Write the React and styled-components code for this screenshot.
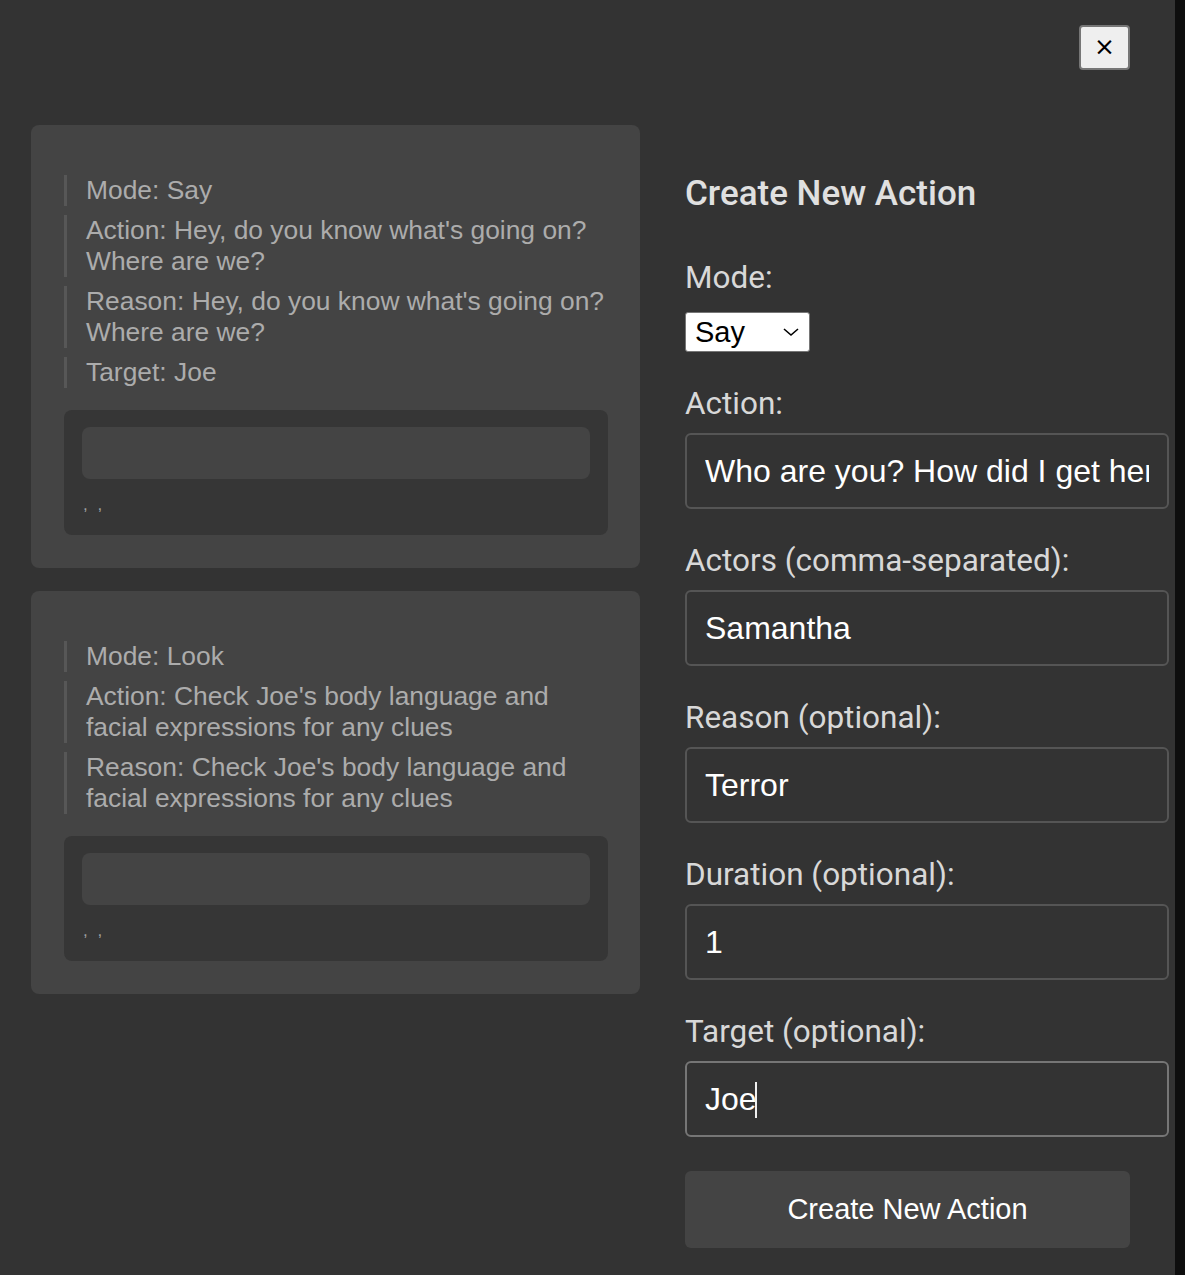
import React, { useState } from "react";
import styled, { createGlobalStyle } from "styled-components";

const GlobalStyle = createGlobalStyle`
  html, body {
    margin: 0;
    padding: 0;
    background: #0e0e0e;
  }
  * {
    box-sizing: border-box;
  }
`;

const Modal = styled.div`
  width: 1175px;
  min-height: 1275px;
  background: #333333;
  padding: 25px 45px 0 31px;
  overflow: hidden;
`;

const TopBar = styled.div`
  display: flex;
  justify-content: flex-end;
`;

const CloseButton = styled.button`
  width: 51px;
  height: 45px;
  background: #efefef;
  border: 2px solid #767676;
  border-radius: 4px;
  color: #000;
  font-family: "DejaVu Sans", sans-serif;
  font-size: 25px;
  line-height: 1;
  padding: 0 0 2px;
  cursor: pointer;
`;

const Columns = styled.div`
  display: flex;
  align-items: flex-start;
  gap: 45px;
  margin-top: 55px;
`;

const ActionList = styled.div`
  width: 609px;
  display: flex;
  flex-direction: column;
  gap: 23px;
`;

const Card = styled.div`
  background: #444444;
  border-radius: 8px;
  padding: 50px 32px 33px 33px;
`;

const Lines = styled.div`
  display: flex;
  flex-direction: column;
  gap: 9px;
  margin-bottom: 22px;
`;

const Line = styled.div`
  border-left: 3px solid #575757;
  padding-left: 19px;
  color: #acacac;
  font-family: "Liberation Sans", Arial, sans-serif;
  font-size: 26.4px;
  line-height: 31px;
`;

const Result = styled.div`
  background: #363636;
  border-radius: 8px;
  padding: 17px 18px 20px;
`;

const ResultBar = styled.div`
  height: 52px;
  background: #444444;
  border-radius: 8px;
`;

const ResultMeta = styled.div`
  margin-top: 16px;
  color: #a0a0a0;
  font-family: "Liberation Sans", Arial, sans-serif;
  font-size: 17px;
  line-height: 20px;
  word-spacing: 5px;
  padding-left: 1px;
`;

const Form = styled.form`
  width: 445px;
  padding-top: 48px;
  font-family: Roboto, "Liberation Sans", sans-serif;
`;

const Title = styled.h2`
  margin: 0 0 46px;
  color: #e0e0e0;
  font-family: Roboto, sans-serif;
  font-size: 35px;
  font-weight: 500;
  line-height: 41px;
`;

const Field = styled.div`
  margin-bottom: 34px;
`;

const Label = styled.label`
  display: block;
  color: #d8d8d8;
  font-family: Roboto, sans-serif;
  font-size: 31.5px;
  line-height: 36px;
  margin-bottom: 11px;
`;

const SelectWrap = styled.div`
  position: relative;
  width: 125px;
  margin-top: 16px;
`;

const Select = styled.select`
  display: block;
  appearance: none;
  width: 125px;
  height: 40px;
  background: #ffffff;
  color: #000;
  border: 1px solid #767676;
  border-radius: 3px;
  font-family: "Liberation Sans", Arial, sans-serif;
  font-size: 29px;
  padding: 0 0 0 9px;
`;

const Chevron = styled.svg`
  position: absolute;
  right: 10px;
  top: 15px;
  width: 18px;
  height: 10px;
  pointer-events: none;
`;

const InputWrap = styled.div`
  position: relative;
  width: 484px;
`;

const Input = styled.input`
  display: block;
  width: 484px;
  height: 76px;
  padding: 0 18px;
  background: #333333;
  color: #ffffff;
  border: 2px solid #555555;
  border-radius: 6px;
  font-family: "Liberation Sans", Arial, sans-serif;
  font-size: 32px;
  outline: none;
  caret-color: ${(p) => (p.$fakeCaret ? "transparent" : "#fff")};

  &:focus {
    border-color: #767676;
  }
`;

const Caret = styled.span`
  position: absolute;
  left: ${(p) => p.$left}px;
  top: 21px;
  width: 2px;
  height: 36px;
  background: #f0f0f0;
  pointer-events: none;
`;

const SubmitButton = styled.button`
  width: 445px;
  height: 77px;
  background: #444444;
  color: #ffffff;
  border: none;
  border-radius: 6px;
  font-family: "Liberation Sans", Arial, sans-serif;
  font-size: 29px;
  cursor: pointer;
`;

const actions = [
  {
    mode: "Say",
    action: "Hey, do you know what's going on? Where are we?",
    reason: "Hey, do you know what's going on? Where are we?",
    target: "Joe",
  },
  {
    mode: "Look",
    action: "Check Joe's body language and facial expressions for any clues",
    reason: "Check Joe's body language and facial expressions for any clues",
  },
];

const ActionCard = ({ item }) => (
  <Card>
    <Lines>
      <Line>Mode: {item.mode}</Line>
      <Line>Action: {item.action}</Line>
      {item.reason && <Line>Reason: {item.reason}</Line>}
      {item.target && <Line>Target: {item.target}</Line>}
    </Lines>
    <Result>
      <ResultBar />
      <ResultMeta>, ,</ResultMeta>
    </Result>
  </Card>
);

const TextField = ({ id, label, value, onChange, caretAt }) => (
  <Field>
    <Label htmlFor={id}>{label}</Label>
    <InputWrap>
      <Input
        id={id}
        name={id}
        value={value}
        onChange={onChange}
        autoFocus={caretAt != null}
        $fakeCaret={caretAt != null}
      />
      {caretAt != null && <Caret $left={caretAt} />}
    </InputWrap>
  </Field>
);

const App = () => {
  const [form, setForm] = useState({
    mode: "Say",
    action: "Who are you? How did I get here?",
    actors: "Samantha",
    reason: "Terror",
    duration: "1",
    target: "Joe",
  });

  const handleChange = (e) => {
    const { name, value } = e.target;
    setForm((prev) => ({ ...prev, [name]: value }));
  };

  return (
    <>
      <GlobalStyle />
      <Modal>
        <TopBar>
          <CloseButton type="button">×</CloseButton>
        </TopBar>
        <Columns>
          <ActionList>
            {actions.map((a, i) => (
              <ActionCard key={i} item={a} />
            ))}
          </ActionList>

          <Form onSubmit={(e) => e.preventDefault()}>
            <Title>Create New Action</Title>

            <Field>
              <Label htmlFor="mode">Mode:</Label>
              <SelectWrap>
                <Select id="mode" name="mode" value={form.mode} onChange={handleChange}>
                  <option value="Say">Say</option>
                  <option value="Look">Look</option>
                  <option value="Move">Move</option>
                </Select>
                <Chevron viewBox="0 0 18 10" fill="none">
                  <path d="M2 2l7 6 7-6" stroke="#000" strokeWidth="1.6" />
                </Chevron>
              </SelectWrap>
            </Field>

            <TextField id="action" label="Action:" value={form.action} onChange={handleChange} />
            <TextField
              id="actors"
              label="Actors (comma-separated):"
              value={form.actors}
              onChange={handleChange}
            />
            <TextField id="reason" label="Reason (optional):" value={form.reason} onChange={handleChange} />
            <TextField
              id="duration"
              label="Duration (optional):"
              value={form.duration}
              onChange={handleChange}
            />
            <TextField
              id="target"
              label="Target (optional):"
              value={form.target}
              onChange={handleChange}
              caretAt={70}
            />

            <SubmitButton type="submit">Create New Action</SubmitButton>
          </Form>
        </Columns>
      </Modal>
    </>
  );
};

export default App;
